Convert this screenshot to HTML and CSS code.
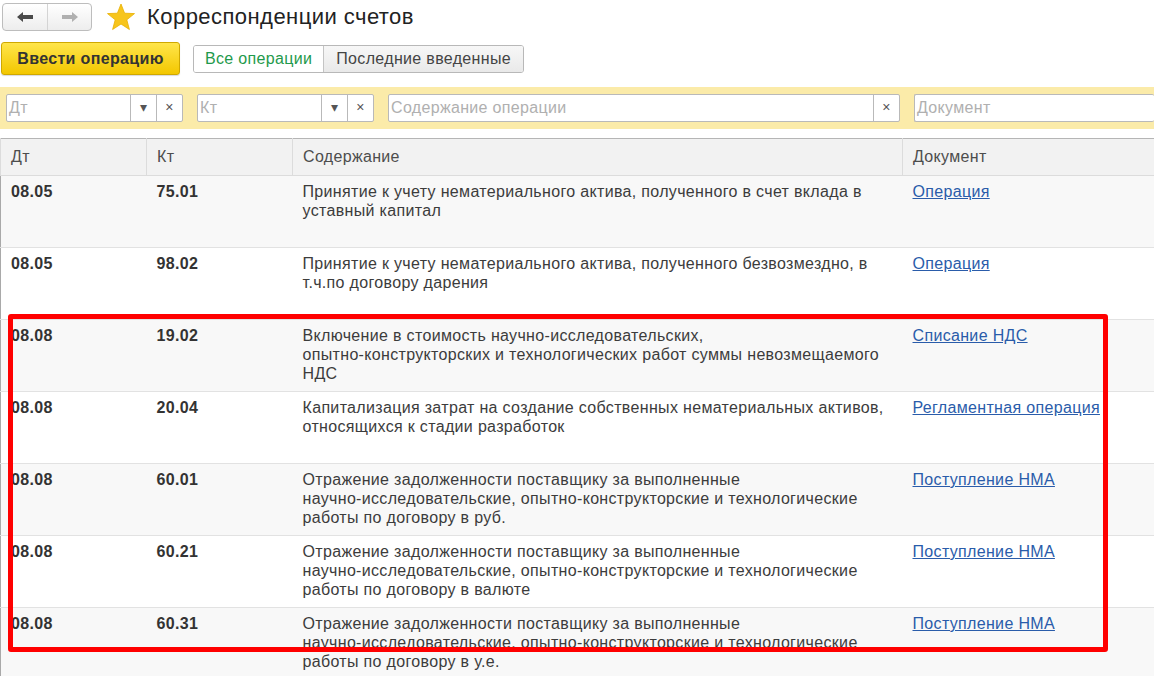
FILE: index.html
```html
<!DOCTYPE html>
<html lang="ru">

<head>
  <meta charset="UTF-8">
  <meta name="viewport" content="width=device-width, initial-scale=1.0">
  <title>Корреспонденции счетов</title>
  <link rel="stylesheet" href="styles.css">
</head>

<body>
  <div class="window">
    <div class="titlebar">
      <div class="nav">
        <button class="nav-btn">
          <svg width="18" height="12" viewBox="0 0 18 12"><path d="M1 6 L7 1 L7 4 L17 4 L17 8 L7 8 L7 11 Z" fill="#4a4a4a"/></svg>
        </button>
        <button class="nav-btn">
          <svg width="18" height="12" viewBox="0 0 18 12"><path d="M17 6 L11 1 L11 4 L1 4 L1 8 L11 8 L11 11 Z" fill="#b0b0b0"/></svg>
        </button>
      </div>
      <svg class="star" width="30" height="28" viewBox="0 0 30 28"><path d="M15 1 L18.6 10.2 L28.5 10.6 L20.8 16.8 L23.4 26.5 L15 21 L6.6 26.5 L9.2 16.8 L1.5 10.6 L11.4 10.2 Z" fill="#f7c51c" stroke="#e9b000" stroke-width="0.8"/></svg>
      <h1>Корреспонденции счетов</h1>
    </div>

    <div class="toolbar">
      <button class="btn-main">Ввести операцию</button>
      <div class="tabs">
        <span class="tab active">Все операции</span>
        <span class="tab">Последние введенные</span>
      </div>
    </div>

    <div class="filters">
      <div class="field f-dt">
        <span class="ph">Дт</span>
        <span class="fbtn">&#9662;</span>
        <span class="fbtn">&#215;</span>
      </div>
      <div class="field f-kt">
        <span class="ph">Кт</span>
        <span class="fbtn">&#9662;</span>
        <span class="fbtn">&#215;</span>
      </div>
      <div class="field f-text">
        <span class="ph">Содержание операции</span>
        <span class="fbtn">&#215;</span>
      </div>
      <div class="field f-doc">
        <span class="ph">Документ</span>
      </div>
    </div>

    <div class="grid-wrap">
      <table class="grid">
        <colgroup>
          <col class="c-dt">
          <col class="c-kt">
          <col class="c-text">
          <col class="c-doc">
        </colgroup>
        <thead>
          <tr>
            <th>Дт</th>
            <th>Кт</th>
            <th>Содержание</th>
            <th>Документ</th>
          </tr>
        </thead>
        <tbody>
          <tr>
            <td class="acc">08.05</td>
            <td class="acc">75.01</td>
            <td>Принятие к учету нематериального актива, полученного в счет вклада в уставный капитал</td>
            <td><a href="#">Операция</a></td>
          </tr>
          <tr>
            <td class="acc">08.05</td>
            <td class="acc">98.02</td>
            <td>Принятие к учету нематериального актива, полученного безвозмездно, в т.ч.по договору дарения</td>
            <td><a href="#">Операция</a></td>
          </tr>
          <tr>
            <td class="acc">08.08</td>
            <td class="acc">19.02</td>
            <td>Включение в стоимость научно&#8209;исследовательских, опытно&#8209;конструкторских и технологических работ суммы невозмещаемого НДС</td>
            <td><a href="#">Списание НДС</a></td>
          </tr>
          <tr>
            <td class="acc">08.08</td>
            <td class="acc">20.04</td>
            <td>Капитализация затрат на создание собственных нематериальных активов, относящихся к стадии разработок</td>
            <td><a href="#">Регламентная операция</a></td>
          </tr>
          <tr>
            <td class="acc">08.08</td>
            <td class="acc">60.01</td>
            <td>Отражение задолженности поставщику за выполненные научно&#8209;исследовательские, опытно&#8209;конструкторские и технологические работы по договору в руб.</td>
            <td><a href="#">Поступление НМА</a></td>
          </tr>
          <tr>
            <td class="acc">08.08</td>
            <td class="acc">60.21</td>
            <td>Отражение задолженности поставщику за выполненные научно&#8209;исследовательские, опытно&#8209;конструкторские и технологические работы по договору в валюте</td>
            <td><a href="#">Поступление НМА</a></td>
          </tr>
          <tr>
            <td class="acc">08.08</td>
            <td class="acc">60.31</td>
            <td>Отражение задолженности поставщику за выполненные научно&#8209;исследовательские, опытно&#8209;конструкторские и технологические работы по договору в у.е.</td>
            <td><a href="#">Поступление НМА</a></td>
          </tr>
        </tbody>
      </table>
      <div class="highlight"></div>
    </div>
  </div>
</body>
</html>
```

FILE: styles.css
```css
body {
  font-family: "Liberation Sans", Arial, sans-serif;
  background-color: #fff;
  margin: 0;
  padding: 0;
  color: #333;
  overflow: hidden;
  letter-spacing: 0.33px;
}

.window {
  width: 1154px;
  height: 676px;
  overflow: hidden;
}

.titlebar {
  display: flex;
  align-items: center;
  height: 34px;
  padding: 0 0 0 2px;
}

.nav {
  display: flex;
  height: 28px;
  border: 1px solid #bdbdbd;
  border-radius: 4px;
  background: linear-gradient(#ffffff, #ededed);
  box-sizing: border-box;
}

.nav-btn {
  width: 44px;
  height: 26px;
  border: none;
  background: none;
  padding: 0;
  display: flex;
  align-items: center;
  justify-content: center;
}

.nav-btn + .nav-btn {
  border-left: 1px solid #d4d4d4;
}

.star {
  margin-left: 14px;
}

h1 {
  font-size: 22px;
  font-weight: normal;
  letter-spacing: 0.45px;
  color: #222;
  margin: 0 0 0 11px;
}

.toolbar {
  display: flex;
  align-items: center;
  gap: 13px;
  height: 42px;
  padding: 7px 0 0 1px;
  box-sizing: border-box;
}

.btn-main {
  width: 179px;
  height: 33px;
  font-family: inherit;
  font-size: 16px;
  font-weight: bold;
  letter-spacing: 0.35px;
  color: #333;
  background: linear-gradient(#ffe54a, #f3c700);
  border: 1px solid #cfa800;
  border-radius: 3px;
  box-shadow: 0 1px 1px rgba(0, 0, 0, 0.15);
}

.tabs {
  display: flex;
  height: 28px;
  border: 1px solid #b8b8b8;
  border-radius: 3px;
  box-sizing: border-box;
  overflow: hidden;
  font-size: 16px;
}

.tab {
  display: flex;
  align-items: center;
  padding: 0 12px;
  background: linear-gradient(#f7f7f7, #e9e9e9);
  color: #444;
}

.tab.active {
  padding: 0 11px;
  background: #fff;
  color: #1f9a4c;
  border-right: 1px solid #c4c4c4;
}

.filters {
  display: flex;
  gap: 14px;
  margin-top: 11px;
  height: 42px;
  padding: 7px 0 0 6px;
  box-sizing: border-box;
  background-color: #fbeba9;
}

.field {
  display: flex;
  height: 28px;
  background: #fff;
  border: 1px solid #b9b9b9;
  border-radius: 2px;
  box-sizing: border-box;
  font-size: 16px;
}

.ph {
  flex: 1;
  color: #b0b0b0;
  padding: 0 2px;
  line-height: 26px;
}

.fbtn {
  width: 25px;
  border-left: 1px solid #b9b9b9;
  text-align: center;
  line-height: 25px;
  color: #555;
  font-size: 14px;
}

.f-dt, .f-kt {
  width: 177px;
}

.f-text {
  width: 512px;
}

.f-doc {
  flex: 1;
  border-right: none;
}

.grid-wrap {
  position: relative;
  margin-top: 9px;
}

.grid {
  width: 1160px;
  border-collapse: collapse;
  table-layout: fixed;
  border-top: 1px solid #b5b5b5;
  border-left: 1px solid #a9a9a9;
  font-size: 16px;
}

.c-dt { width: 146px; }
.c-kt { width: 146px; }
.c-text { width: 610px; }
.c-doc { width: 258px; }

.grid th {
  height: 36px;
  background-color: #f2f2f2;
  font-weight: normal;
  color: #4d4d4d;
  text-align: left;
  padding: 0 10px;
  border-left: 1px solid #dcdcdc;
  border-bottom: 1px solid #dcdcdc;
}

.grid td {
  height: 72px;
  vertical-align: top;
  padding: 6px 10px 0 10px;
  line-height: 19px;
  color: #3c3c3c;
  border-bottom: 1px solid #e2e2e2;
  box-sizing: border-box;
}

.grid tbody tr:nth-child(odd) td {
  background-color: #f8f8f8;
}

.grid td.acc {
  font-weight: bold;
  color: #333;
}

.grid a {
  color: #2a5caa;
}

.highlight {
  position: absolute;
  left: 8px;
  top: 176px;
  width: 1100px;
  height: 338px;
  border: 5px solid #ff0000;
  border-radius: 3px;
  box-sizing: border-box;
}
```
